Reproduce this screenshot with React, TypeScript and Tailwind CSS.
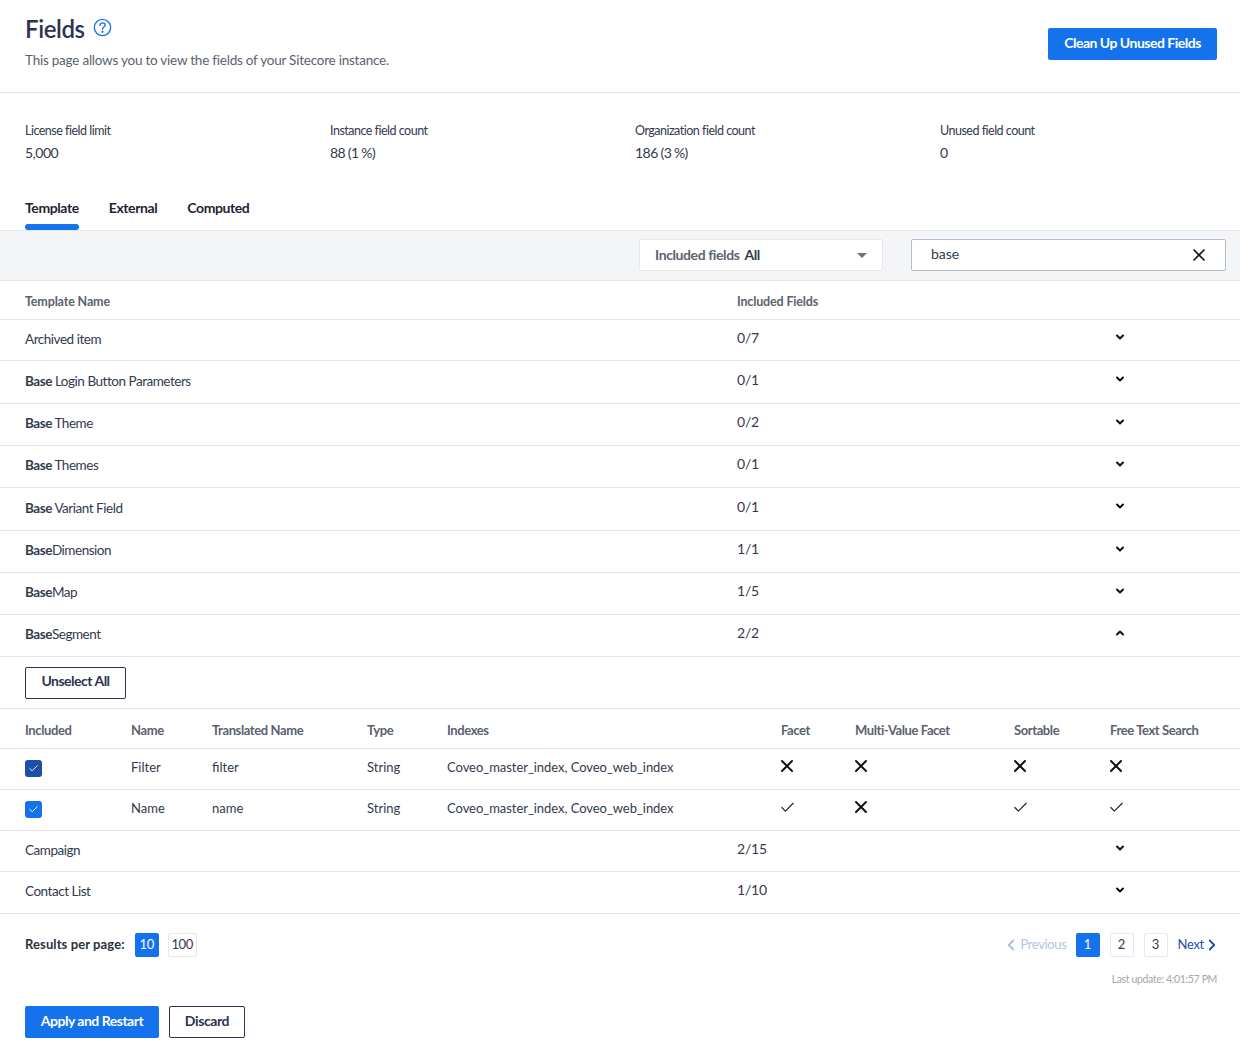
import { Check, ChevronDown, ChevronLeft, ChevronRight, ChevronUp, X } from "lucide-react";

const stats = [
  { label: "License field limit", value: "5,000" },
  { label: "Instance field count", value: "88 (1 %)" },
  { label: "Organization field count", value: "186 (3 %)" },
  { label: "Unused field count", value: "0" },
];

const before = [
  { bold: "", rest: "Archived item", count: "0/7", h: "h-[41px]" },
  { bold: "Base", rest: " Login Button Parameters", count: "0/1", h: "h-[43px]" },
  { bold: "Base", rest: " Theme", count: "0/2", h: "h-[42px]" },
  { bold: "Base", rest: " Themes", count: "0/1", h: "h-[42px]" },
  { bold: "Base", rest: " Variant Field", count: "0/1", h: "h-[43px]" },
  { bold: "Base", rest: "Dimension", count: "1/1", h: "h-[42px]" },
  { bold: "Base", rest: "Map", count: "1/5", h: "h-[42px]" },
];

const after = [
  { bold: "", rest: "Campaign", count: "2/15", h: "h-[41px]" },
  { bold: "", rest: "Contact List", count: "1/10", h: "h-[42px]" },
];

const fields = [
  { name: "Filter", translated: "filter", box: "bg-[#1c4fa8]", flags: [false, false, false, false] },
  { name: "Name", translated: "name", box: "bg-[#1372ec]", flags: [true, false, true, true] },
];

const subGrid = "grid grid-cols-[106px_81px_155px_80px_334px_74px_159px_96px_1fr] items-center pl-[25px]";
const rowGrid = "grid grid-cols-[712px_378px_1fr] items-center border-b border-[#e3e5e9] pl-[25px] text-[#333a4d]";

function Row({ bold, rest, count, h, open }: { bold: string; rest: string; count: string; h: string; open?: boolean }) {
  return (
    <div className={`${rowGrid} ${h} pb-[4px]`}>
      <div className="mt-[2px] whitespace-pre text-[13.5px] tracking-[-0.47px]">
        <span className="font-bold">{bold}</span>
        {rest}
      </div>
      <div className="-mt-[2px] text-[14px] tracking-[-0.2px]">{count}</div>
      <div className="-mt-[2px] -ml-[1px]">
        {open ? (
          <ChevronUp className="h-3 w-3 text-[#111]" strokeWidth={4} />
        ) : (
          <ChevronDown className="h-3 w-3 text-[#111]" strokeWidth={4} />
        )}
      </div>
    </div>
  );
}

function Flag({ on }: { on: boolean }) {
  return on ? (
    <Check className="-mt-[4px] -ml-[2px] h-[17px] w-[17px] text-[#222]" strokeWidth={1.6} />
  ) : (
    <X className="-mt-[4px] -ml-[4px] h-5 w-5 text-[#111]" strokeWidth={2.4} />
  );
}

export default function App() {
  return (
    <div className="min-h-[1048px] w-[1240px] overflow-hidden bg-white font-['Lato',sans-serif] text-[#333a4d]">
      {/* Header */}
      <header className="flex h-[93px] items-start justify-between border-b border-[#e3e5e9] pl-[25px] pr-[23px]">
        <div>
          <div className="mt-[14px] flex items-center gap-[8px]">
            <h1 className="text-[24px] font-semibold leading-[30px] tracking-[-0.4px] text-[#2e3350]">Fields</h1>
            <svg viewBox="0 0 20 20" className="-mt-[3px] h-[19px] w-[19px]" fill="none" stroke="#1372ec" strokeWidth="1.4">
              <circle cx="10" cy="10" r="8.6" />
              <path d="M7.3 7.8c0-1.6 1.2-2.6 2.8-2.6 1.5 0 2.7 1 2.7 2.3 0 2-2.8 2.2-2.8 4.4" strokeLinecap="round" />
              <circle cx="10" cy="14.6" r="0.5" fill="#1372ec" />
            </svg>
          </div>
          <p className="mt-[7px] text-[13.5px] leading-[18px] tracking-[-0.23px] text-[#5b6270]">
            This page allows you to view the fields of your Sitecore instance.
          </p>
        </div>
        <button className="mt-[28px] h-8 w-[169px] rounded-[2px] bg-[#1372ec] pb-[3px] text-[14px] font-bold tracking-[-0.5px] text-white">
          Clean Up Unused Fields
        </button>
      </header>

      {/* Stats */}
      <section className="grid grid-cols-[305px_305px_305px_1fr] pl-[25px] pt-[29px] text-[#333a4d]">
        {stats.map((s) => (
          <div key={s.label}>
            <div className="text-[12.5px] leading-[18px] tracking-[-0.5px]">{s.label}</div>
            <div className="mt-[4px] text-[14px] leading-[18px] tracking-[-0.5px] [word-spacing:-0.5px]">{s.value}</div>
          </div>
        ))}
      </section>

      {/* Tabs */}
      <nav className="mt-[30px] flex h-[38px] gap-[30px] pl-[25px] pt-[7px] text-[14px] font-bold tracking-[-0.4px] text-[#1f2433]">
        <div className="relative -mt-[7px] pt-[7px] leading-[18px]">
          Template
          <span className="absolute bottom-0 left-0 h-[6px] w-full rounded-full bg-[#1372ec]" />
        </div>
        <div className="leading-[18px]">External</div>
        <div className="leading-[18px]">Computed</div>
      </nav>

      {/* Filters */}
      <div className="flex h-[51px] items-start justify-end gap-[28px] border-y border-[#e3e5e9] bg-[#f4f5f7] pr-[14px] pt-[8px]">
        <div className="flex h-8 w-[244px] items-center justify-between rounded-[2px] border border-[#e6e8ec] bg-white pb-[2px] pl-[15px] pr-[15px] text-[14px] font-bold tracking-[-0.4px]">
          <span>
            <span className="text-[#5b6270]">Included fields</span>
            <span className="ml-[5px] text-[#333a4d]">All</span>
          </span>
          <span className="mt-[2px] h-0 w-0 border-x-[5px] border-t-[5px] border-x-transparent border-t-[#6b7280]" />
        </div>
        <div className="flex h-8 w-[315px] items-center justify-between rounded-[2px] border border-[#b3bccb] bg-white pl-[19px] pr-[16px] text-[14px] text-[#333a4d]">
          <span className="-mt-[3px]">base</span>
          <X className="h-5 w-5 text-[#111]" strokeWidth={2} />
        </div>
      </div>

      {/* Templates */}
      <div className={`${rowGrid} h-[39px] pt-[4px] text-[12.5px] font-bold tracking-[-0.15px] !text-[#5b6270]`}>
        <div>Template Name</div>
        <div>Included Fields</div>
      </div>
      {before.map((r) => (
        <Row key={r.bold + r.rest} {...r} />
      ))}
      <Row bold="Base" rest="Segment" count="2/2" h="h-[42px]" open />

      {/* Expanded template */}
      <div className="flex h-[52px] items-start border-b border-[#e3e5e9] pl-[25px] pt-[10px]">
        <button className="h-8 w-[101px] rounded-[2px] border border-[#2e3350] pb-[5px] text-[14px] font-bold tracking-[-0.5px] text-[#2e3350]">
          Unselect All
        </button>
      </div>
      <div className={`${subGrid} h-[40px] border-b border-[#e3e5e9] pt-[4px] text-[13px] font-bold tracking-[-0.4px] text-[#5b6270]`}>
        <div>Included</div>
        <div>Name</div>
        <div>Translated Name</div>
        <div>Type</div>
        <div>Indexes</div>
        <div>Facet</div>
        <div>Multi-Value Facet</div>
        <div>Sortable</div>
        <div>Free Text Search</div>
      </div>
      {fields.map((f) => (
        <div key={f.name} className={`${subGrid} h-[41px] border-b border-[#e3e5e9] pb-[2px] text-[13px] text-[#333a4d]`}>
          <div>
            <span className={`flex h-[17px] w-[17px] items-center justify-center rounded-[3px] ${f.box}`}>
              <Check className="h-[11px] w-[11px] text-white" strokeWidth={2} />
            </span>
          </div>
          <div>{f.name}</div>
          <div>{f.translated}</div>
          <div>String</div>
          <div className="tracking-[-0.05px]">Coveo_master_index, Coveo_web_index</div>
          {f.flags.map((on, i) => (
            <Flag key={i} on={on} />
          ))}
        </div>
      ))}
      {after.map((r) => (
        <Row key={r.rest} {...r} />
      ))}

      {/* Pagination */}
      <div className="flex items-start justify-between pl-[25px] pr-[19px] pt-[19px]">
        <div className="flex items-center text-[13px]">
          <span className="mr-[10px] font-bold tracking-[0.1px] text-[#2b3040]">Results per page:</span>
          <span className="flex h-6 w-6 items-center justify-center rounded-[2px] bg-[#1372ec] tracking-[-0.3px] text-white">10</span>
          <span className="ml-[9px] flex h-6 w-[29px] items-center justify-center rounded-[2px] border border-[#e6e8ec] tracking-[-0.5px] text-[#333a4d]">100</span>
        </div>
        <div className="flex items-center text-[13px]">
          <ChevronLeft className="h-[18px] w-[18px] text-[#a9bde0]" strokeWidth={2.4} />
          <span className="tracking-[-0.35px] text-[#b4c3e0]">Previous</span>
          <span className="ml-[9px] flex h-6 w-6 items-center justify-center rounded-[2px] bg-[#1372ec] text-white">1</span>
          <span className="ml-[10px] flex h-6 w-6 items-center justify-center rounded-[2px] border border-[#e6e8ec]">2</span>
          <span className="ml-[10px] flex h-6 w-6 items-center justify-center rounded-[2px] border border-[#e6e8ec]">3</span>
          <span className="ml-[10px] tracking-[-0.3px] text-[#1c4fa8]">Next</span>
          <ChevronRight className="-ml-[1px] h-[18px] w-[18px] text-[#1c4fa8]" strokeWidth={2.4} />
        </div>
      </div>
      <div className="mt-[15px] pr-[23px] text-right text-[10.5px] leading-[14px] tracking-[-0.35px] text-[#a3a7af]">Last update: 4:01:57 PM</div>

      {/* Actions */}
      <div className="mt-[20px] flex gap-[10px] pl-[25px]">
        <button className="h-8 w-[134px] rounded-[2px] bg-[#1372ec] pb-[3px] text-[14px] font-bold tracking-[-0.5px] text-white">
          Apply and Restart
        </button>
        <button className="h-8 w-[76px] rounded-[2px] border border-[#2e3350] pb-[3px] text-[14px] font-bold tracking-[-0.4px] text-[#2e3350]">
          Discard
        </button>
      </div>
    </div>
  );
}
